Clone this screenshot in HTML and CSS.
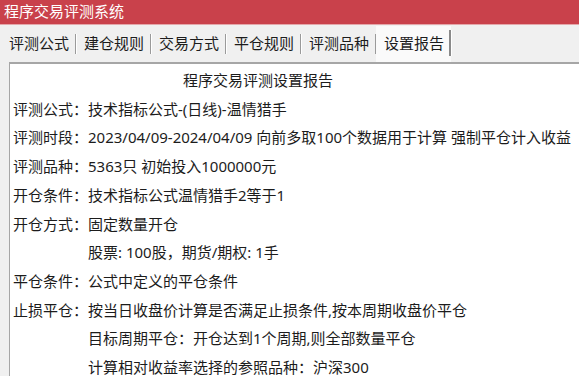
FILE: index.html
```html
<!DOCTYPE html>
<html lang="zh-CN">
<head>
<meta charset="utf-8">
<title>程序交易评测系统</title>
<link rel="stylesheet" href="styles.css">
</head>
<body>
<div class="window">
  <div class="titlebar">程序交易评测系统</div>
  <div class="tabbar">
    <div class="tab">评测公式</div>
    <div class="tab">建仓规则</div>
    <div class="tab">交易方式</div>
    <div class="tab">平仓规则</div>
    <div class="tab">评测品种</div>
    <div class="tab active">设置报告</div>
  </div>
  <div class="body">
    <div class="panel">
      <div class="heading">程序交易评测设置报告</div>
      <div class="row"><span class="label">评测公式：</span><span class="value">技术指标公式-(日线)-温情猎手</span></div>
      <div class="row"><span class="label">评测时段：</span><span class="value">2023/04/09-2024/04/09 向前多取100个数据用于计算 强制平仓计入收益</span></div>
      <div class="row"><span class="label">评测品种：</span><span class="value">5363只 初始投入1000000元</span></div>
      <div class="row"><span class="label">开仓条件：</span><span class="value">技术指标公式温情猎手2等于1</span></div>
      <div class="row"><span class="label">开仓方式：</span><span class="value">固定数量开仓</span></div>
      <div class="row"><span class="label"></span><span class="value">股票: 100股，期货/期权: 1手</span></div>
      <div class="row"><span class="label">平仓条件：</span><span class="value">公式中定义的平仓条件</span></div>
      <div class="row"><span class="label">止损平仓：</span><span class="value">按当日收盘价计算是否满足止损条件,按本周期收盘价平仓</span></div>
      <div class="row"><span class="label"></span><span class="value">目标周期平仓：开仓达到1个周期,则全部数量平仓</span></div>
      <div class="row"><span class="label"></span><span class="value">计算相对收益率选择的参照品种：沪深300</span></div>
    </div>
  </div>
</div>
</body>
</html>
```
FILE: styles.css
```css
html, body {
  margin: 0;
  padding: 0;
}
body {
  width: 579px;
  height: 376px;
  overflow: hidden;
  background: #f0f0f0;
  font-family: "Noto Sans", "Noto Sans CJK SC", sans-serif;
  color: #1c1c1c;
}
.window {
  display: flex;
  flex-direction: column;
  height: 376px;
}
.titlebar {
  height: 24px;
  line-height: 23px;
  background: #c9414b;
  color: #ffffff;
  font-size: 15px;
  padding-left: 4px;
  border-bottom: 1px solid #e4a7aa;
  white-space: nowrap;
}
.tabbar {
  display: flex;
  height: 37px;
  padding-left: 1px;
  box-sizing: border-box;
  padding-top: 1px;
}
.tab {
  position: relative;
  padding: 0 7px 0 8px;
  font-size: 15px;
  line-height: 34px;
  height: 36px;
  white-space: nowrap;
  color: #1c1c1c;
}
.tab::after {
  content: "";
  position: absolute;
  right: 0;
  top: 8px;
  width: 1px;
  height: 20px;
  background: #9a9a9a;
  box-shadow: 1px 0 0 #ffffff;
}
.tab.active {
  background: #fafafa;
}
.tab.active::after {
  top: 4px;
  height: 26px;
  width: 2px;
  background: #8a8a8a;
}
.body {
  flex: 1;
  display: flex;
  padding-left: 9px;
  min-height: 0;
}
.panel {
  flex: 1;
  background: #ffffff;
  border-top: 2px solid #a6a6a6;
  border-left: 1px solid #a6a6a6;
  padding-top: 2px;
  padding-left: 3px;
  overflow: hidden;
  font-size: 15px;
  line-height: 28.7px;
}
.heading {
  padding-left: 170px;
  white-space: nowrap;
}
.row {
  display: flex;
  white-space: nowrap;
}
.label {
  width: 75px;
  flex: none;
}
.value {
  flex: none;
}
```
